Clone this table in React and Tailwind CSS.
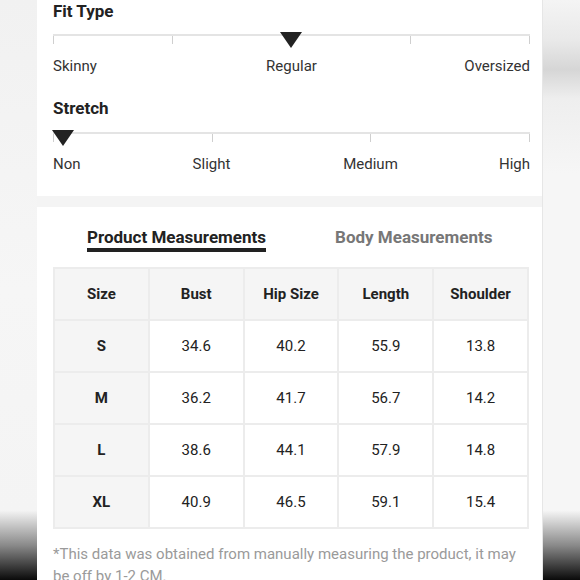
const fitTicks = 4;
const stretchTicks = 3;

const sizes = [
  { size: 'S', bust: '34.6', hip: '40.2', length: '55.9', shoulder: '13.8' },
  { size: 'M', bust: '36.2', hip: '41.7', length: '56.7', shoulder: '14.2' },
  { size: 'L', bust: '38.6', hip: '44.1', length: '57.9', shoulder: '14.8' },
  { size: 'XL', bust: '40.9', hip: '46.5', length: '59.1', shoulder: '15.4' },
];

const Scale = ({ segments, markerClass }) => (
  <div className="relative">
    <div className="flex border-t-2 border-[#e4e4e4]">
      {Array.from({ length: segments }).map((_, i) => (
        <div
          key={i}
          className={`flex-1 h-[8px] border-l border-[#cfcfcf] ${i === segments - 1 ? 'border-r' : ''}`}
        />
      ))}
    </div>
    <div
      className={`absolute top-[-2px] w-0 h-0 border-l-[11px] border-r-[11px] border-t-[16px] border-l-transparent border-r-transparent border-t-[#222] ${markerClass}`}
    />
  </div>
);

const App = () => {
  return (
    <div
      className="w-[580px] h-[580px] overflow-hidden flex text-[#222]"
      style={{ fontFamily: 'Roboto, "Liberation Sans", sans-serif' }}
    >
      <div className="w-[37px] shrink-0 bg-[linear-gradient(to_bottom,#f1f1f1_0%,#f6f6f6_50%,#f4f4f4_88%,#8a8a8a_94%,#0a0a0a_100%)]" />

      <div className="w-[505px] shrink-0 flex flex-col bg-white">
        <div className="shrink-0 pl-[16px] pr-[12px] pb-[22px]">
          <h2 className="text-[17px] leading-[22px] font-bold">Fit Type</h2>
          <div className="mt-[12px]">
            <Scale segments={fitTicks} markerClass="left-[227px]" />
          </div>
          <div className="mt-[12px] grid grid-cols-3 text-[15px] leading-[20px] text-[#333]">
            <span className="text-left">Skinny</span>
            <span className="text-center">Regular</span>
            <span className="text-right">Oversized</span>
          </div>

          <h2 className="mt-[21px] text-[17px] leading-[22px] font-bold">Stretch</h2>
          <div className="mt-[13px]">
            <Scale segments={stretchTicks} markerClass="left-[-1px]" />
          </div>
          <div className="mt-[12px] grid grid-cols-[79px_159px_159px_1fr] text-[15px] leading-[20px] text-[#333]">
            <span className="text-left">Non</span>
            <span className="text-center">Slight</span>
            <span className="text-center">Medium</span>
            <span className="text-right">High</span>
          </div>
        </div>

        <div className="h-[11px] shrink-0 bg-[#f4f4f4]" />

        <div className="shrink-0 pl-[16px] pr-[12px] pt-[19px]">
          <div className="flex gap-[69px] ml-[34px]">
            <div className="flex flex-col">
              <span className="text-[17px] leading-[22px] font-bold text-[#222]">Product Measurements</span>
              <div className="h-[4px] bg-[#222]" />
            </div>
            <span className="text-[17px] leading-[22px] font-bold text-[#777]">Body Measurements</span>
          </div>

          <table className="mt-[15px] w-[476px] table-fixed border-collapse text-[15px]">
            <thead>
              <tr className="h-[52px] bg-[#f5f5f5]">
                {['Size', 'Bust', 'Hip Size', 'Length', 'Shoulder'].map((h) => (
                  <th key={h} className="border-2 border-[#ececec] font-bold text-center">
                    {h}
                  </th>
                ))}
              </tr>
            </thead>
            <tbody>
              {sizes.map((row) => (
                <tr key={row.size} className="h-[52px]">
                  <td className="border-2 border-[#ececec] bg-[#f5f5f5] font-bold text-center">{row.size}</td>
                  <td className="border-2 border-[#ececec] text-center">{row.bust}</td>
                  <td className="border-2 border-[#ececec] text-center">{row.hip}</td>
                  <td className="border-2 border-[#ececec] text-center">{row.length}</td>
                  <td className="border-2 border-[#ececec] text-center">{row.shoulder}</td>
                </tr>
              ))}
            </tbody>
          </table>

          <p className="mt-[14px] max-w-[470px] text-[15px] leading-[22px] text-[#9a9a9a]">
            *This data was obtained from manually measuring the product, it may be off by 1-2 CM.
          </p>
        </div>
      </div>

      <div className="flex-1 border-l border-[#e6e6e6] bg-[linear-gradient(to_bottom,#f4f4f4_0%,#e9e9e9_7%,#d6d6d6_12%,#eeeeee_17%,#f6f6f6_30%,#f6f6f6_88%,#8a8a8a_94%,#0a0a0a_100%)]" />
    </div>
  );
};

export default App;
